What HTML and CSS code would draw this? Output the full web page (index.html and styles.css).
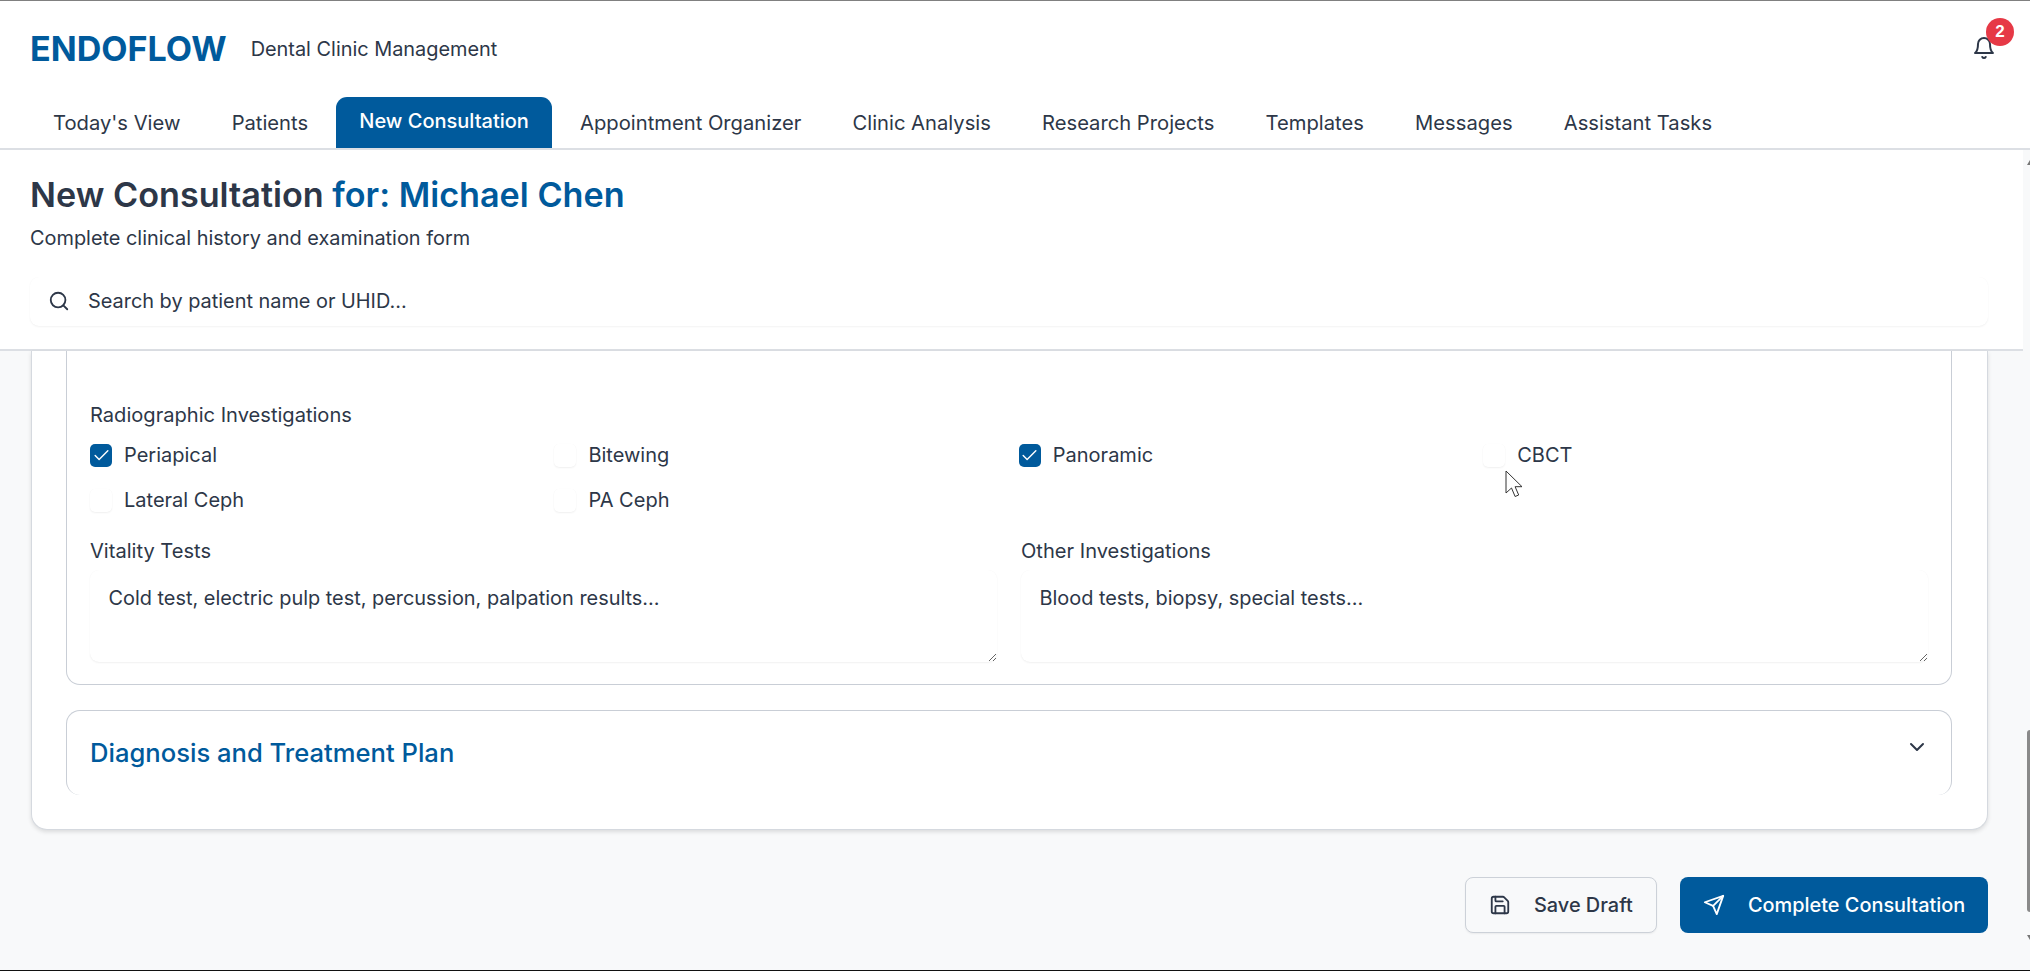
FILE: index.html
```html
<!DOCTYPE html>
<html lang="en">
<head>
<meta charset="utf-8">
<title>ENDOFLOW - New Consultation</title>
<link rel="stylesheet" href="styles.css">
</head>
<body>
<div class="app">
  <header class="site-header">
    <div class="topbar">
      <div class="brand">
        <span class="logo">ENDOFLOW</span>
        <span class="tagline">Dental Clinic Management</span>
      </div>
      <button class="bell" type="button" aria-label="Notifications">
        <svg class="icon bell-icon" viewBox="0 0 24 24"><path d="M6 8a6 6 0 0 1 12 0c0 7 3 9 3 9H3s3-2 3-9"/><path d="M10.3 21a1.94 1.94 0 0 0 3.4 0"/></svg>
        <span class="badge">2</span>
      </button>
    </div>
    <nav class="tabs">
      <a class="tab">Today's View</a>
      <a class="tab">Patients</a>
      <a class="tab active">New Consultation</a>
      <a class="tab">Appointment Organizer</a>
      <a class="tab">Clinic Analysis</a>
      <a class="tab">Research Projects</a>
      <a class="tab">Templates</a>
      <a class="tab">Messages</a>
      <a class="tab">Assistant Tasks</a>
    </nav>
  </header>

  <div class="workspace">
    <section class="page-head">
      <h1 class="page-title">New Consultation <span class="accent">for: Michael Chen</span></h1>
      <p class="page-sub">Complete clinical history and examination form</p>
      <div class="search">
        <svg class="icon search-icon" viewBox="0 0 24 24"><circle cx="11" cy="11" r="8"/><path d="m21 21-4.3-4.3"/></svg>
        <input class="search-input" type="text" placeholder="Search by patient name or UHID...">
      </div>
    </section>

    <main class="content">
      <div class="card">
        <section class="panel panel-open">
          <div class="field-label radio-label">Radiographic Investigations</div>
          <div class="check-grid">
            <label class="check"><span class="box on"><svg class="tick" viewBox="0 0 24 24"><path d="M20 6 9 17l-5-5"/></svg></span>Periapical</label>
            <label class="check"><span class="box"></span>Bitewing</label>
            <label class="check"><span class="box on"><svg class="tick" viewBox="0 0 24 24"><path d="M20 6 9 17l-5-5"/></svg></span>Panoramic</label>
            <label class="check"><span class="box"></span>CBCT</label>
            <label class="check"><span class="box"></span>Lateral Ceph</label>
            <label class="check"><span class="box"></span>PA Ceph</label>
          </div>
          <div class="text-grid">
            <div class="field">
              <label class="field-label">Vitality Tests</label>
              <textarea class="area" placeholder="Cold test, electric pulp test, percussion, palpation results..."></textarea>
            </div>
            <div class="field">
              <label class="field-label">Other Investigations</label>
              <textarea class="area" placeholder="Blood tests, biopsy, special tests..."></textarea>
            </div>
          </div>
        </section>
        <section class="panel panel-closed">
          <h2 class="panel-title">Diagnosis and Treatment Plan</h2>
          <svg class="icon chevron" viewBox="0 0 24 24"><path d="m6 9 6 6 6-6"/></svg>
        </section>
      </div>

      <div class="actions">
        <button class="btn btn-ghost" type="button">
          <svg class="icon btn-icon" viewBox="0 0 24 24"><path d="M15.2 3a2 2 0 0 1 1.4.6l3.8 3.8a2 2 0 0 1 .6 1.4V19a2 2 0 0 1-2 2H5a2 2 0 0 1-2-2V5a2 2 0 0 1 2-2z"/><path d="M17 21v-7a1 1 0 0 0-1-1H8a1 1 0 0 0-1 1v7"/><path d="M7 3v4a1 1 0 0 0 1 1h7"/></svg>
          Save Draft
        </button>
        <button class="btn btn-primary" type="button">
          <svg class="icon btn-icon" viewBox="0 0 24 24"><path d="m22 2-7 20-4-9-9-4Z"/><path d="M22 2 11 13"/></svg>
          Complete Consultation
        </button>
      </div>
    </main>
  </div>

  <div class="scroll-arrow-up"></div>
  <div class="scroll-thumb"></div>
  <div class="scroll-arrow-down"></div>
  <svg class="cursor" viewBox="0 0 18 28"><path d="M1 1v22l5.5-5 3.6 8.5 3.6-1.5-3.6-8.3H17z"/></svg>
</div>
</body>
</html>
```
FILE: styles.css
```css
* { box-sizing: border-box; }
html, body { margin: 0; height: 100%; }
body {
  font-family: Inter, "Liberation Sans", sans-serif;
  color: #2d3748;
  background: #f8f9fa;
  overflow: hidden;
}
.app {
  position: relative;
  height: 971px;
  display: flex;
  flex-direction: column;
  border-top: 1px solid #808080;
  border-bottom: 1px solid #111;
  overflow: hidden;
}
.icon {
  fill: none;
  stroke: currentColor;
  stroke-width: 2;
  stroke-linecap: round;
  stroke-linejoin: round;
  flex: none;
}

/* Header */
.site-header {
  background: #fff;
  border-bottom: 2px solid #dcdfe4;
  height: 149px;
  flex: none;
}
.topbar {
  height: 96px;
  display: flex;
  justify-content: space-between;
  align-items: flex-start;
  padding: 0 16px 0 30px;
}
.brand { display: flex; align-items: center; gap: 24px; height: 94px; }
.logo { font-size: 34.1px; font-weight: 700; color: #005a9c; }
.tagline { font-size: 19.9px; color: #2d3748; padding-top: 2px; }
.bell { position: relative; width: 42px; height: 60px; border: 0; background: none; padding: 0; color: #2d3748; margin-top: 16px; }
.bell-icon { position: absolute; left: 0; top: 19px; width: 24px; height: 24px; }
.badge {
  position: absolute;
  left: 14px;
  top: 1px;
  width: 28px;
  height: 28px;
  border-radius: 50%;
  background: #e63946;
  color: #fff;
  font-size: 17px;
  font-weight: 600;
  display: flex;
  align-items: center;
  justify-content: center;
}
.tabs { display: flex; align-items: flex-end; gap: 5.2px; padding-left: 30px; height: 51px; }
.tab {
  height: 51px;
  padding: 0 23px;
  display: flex;
  align-items: center;
  font-size: 20.2px;
  color: #2d3748;
  padding-top: 0;
}
.tab.active {
  background: #005a9c;
  color: #fff;
  font-size: 20px;
  font-weight: 500;
  border-radius: 11px 11px 0 0;
  padding-top: 0;
  padding-bottom: 3px;
}

/* Workspace */
.workspace { flex: 1; display: flex; flex-direction: column; padding-right: 7px; min-height: 0; }
.page-head {
  background: #fff;
  border-bottom: 2px solid #dcdfe4;
  padding: 24px 35px 0 30px;
  height: 201px;
  flex: none;
}
.page-title { margin: 0; font-size: 34.2px; line-height: 42px; font-weight: 600; color: #2d3748; }
.accent { color: #005a9c; font-weight: 600; }
.page-sub { margin: 9px 0 0; font-size: 19.9px; line-height: 26px; color: #2d3748; }
.search {
  margin-top: 26px;
  height: 49px;
  display: flex;
  align-items: center;
  gap: 18px;
  padding: 0 0 2px 18px;
  border-radius: 9px;
  background: #fff;
  box-shadow: 0 1px 2px rgba(0, 0, 0, .05), 0 0 1px rgba(0, 0, 0, .03);
}
.search-icon { width: 22px; height: 22px; }
.search-input { flex: 1; border: 0; outline: 0; background: none; font: inherit; font-size: 19.9px; color: #2d3748; padding: 0; }
.search-input::placeholder { color: #2d3748; opacity: 1; }

.content { flex: 1; padding: 0 35px 0 31px; min-height: 0; }
.card {
  background: #fff;
  border: 1px solid #d5d9df;
  border-top: 0;
  border-radius: 0 0 16px 16px;
  box-shadow: 0 2px 4px rgba(0, 0, 0, .12);
  padding: 0 35px 34px 34px;
  height: 479px;
}
.panel { border: 1px solid #c9ced6; border-radius: 14px; background: #fff; }
.panel-open {
  border-top: 0;
  border-radius: 0 0 14px 14px;
  height: 334px;
  padding: 51px 23px 0;
}
.panel-closed {
  margin-top: 25px;
  height: 85px;
  border-bottom: 0;
  display: flex;
  align-items: flex-start;
  justify-content: space-between;
  padding: 27px 23px 0;
}
.panel-title { margin: 0; font-size: 25.6px; line-height: 30px; font-weight: 500; color: #005a9c; }
.chevron { width: 24px; height: 24px; margin-top: -3px; margin-right: -1px; color: #2d3748; }
.field-label { display: block; font-size: 20.1px; line-height: 26px; color: #2d3748; }
.check-grid {
  display: grid;
  grid-template-columns: repeat(4, 1fr);
  column-gap: 19.6px;
  row-gap: 19px;
  margin-top: 14px;
}
.check { display: flex; align-items: center; gap: 12px; font-size: 20px; line-height: 26px; color: #2d3748; }
.box {
  width: 22px;
  height: 23px;
  border-radius: 5px;
  background: #fff;
  box-shadow: 0 1px 2px rgba(0, 0, 0, .06), 0 0 1px rgba(0, 0, 0, .04);
  display: flex;
  align-items: center;
  justify-content: center;
  flex: none;
}
.box.on { background: #005a9c; box-shadow: none; }
.tick { width: 19px; height: 19px; fill: none; stroke: #fff; stroke-width: 1.8; stroke-linecap: round; stroke-linejoin: round; }
.text-grid { display: grid; grid-template-columns: 1fr 1fr; column-gap: 24px; margin-top: 25px; }
.area {
  display: block;
  width: 100%;
  height: 92px;
  margin-top: 6px;
  border: 0;
  outline: 0;
  border-radius: 9px;
  background: #fff;
  box-shadow: 0 1px 2px rgba(0, 0, 0, .06), 0 0 1px rgba(0, 0, 0, .03);
  padding: 15px 18.5px;
  font: inherit;
  font-size: 19.9px;
  line-height: 26px;
  color: #2d3748;
}
.area::placeholder { color: #2d3748; opacity: 1; }

.actions { display: flex; justify-content: flex-end; gap: 23px; margin-top: 47px; }
.btn {
  height: 56px;
  border-radius: 8px;
  display: flex;
  align-items: center;
  font: inherit;
  font-size: 19.9px;
  font-weight: 500;
}
.btn-icon { width: 22px; height: 22px; }
.btn-ghost {
  width: 192px;
  background: #f8f9fa;
  color: #2d3748;
  border: 1px solid #ccd1d8;
  box-shadow: 0 1px 2px rgba(0, 0, 0, .06);
  padding: 0 0 0 23px;
  gap: 23px;
}
.btn-primary {
  width: 308px;
  background: #005a9c;
  color: #fff;
  border: 0;
  padding: 0 0 0 23px;
  gap: 23px;
}

/* Overlay scrollbar + pointer */
.scroll-thumb {
  position: absolute;
  right: 0;
  top: 729px;
  width: 3px;
  height: 182px;
  background: #8a8a8a;
  border-radius: 3px 0 0 3px;
}
.scroll-arrow-up, .scroll-arrow-down {
  position: absolute;
  right: 0;
  width: 0;
  height: 0;
  border-left: 3px solid transparent;
}
.scroll-arrow-up { top: 159px; border-bottom: 5px solid #777; }
.scroll-arrow-down { top: 934px; border-top: 5px solid #777; }
.cursor {
  position: absolute;
  left: 1505px;
  top: 469px;
  width: 18px;
  height: 28px;
  fill: #fff;
  stroke: #333;
  stroke-width: 1;
  stroke-linejoin: round;
}
```
